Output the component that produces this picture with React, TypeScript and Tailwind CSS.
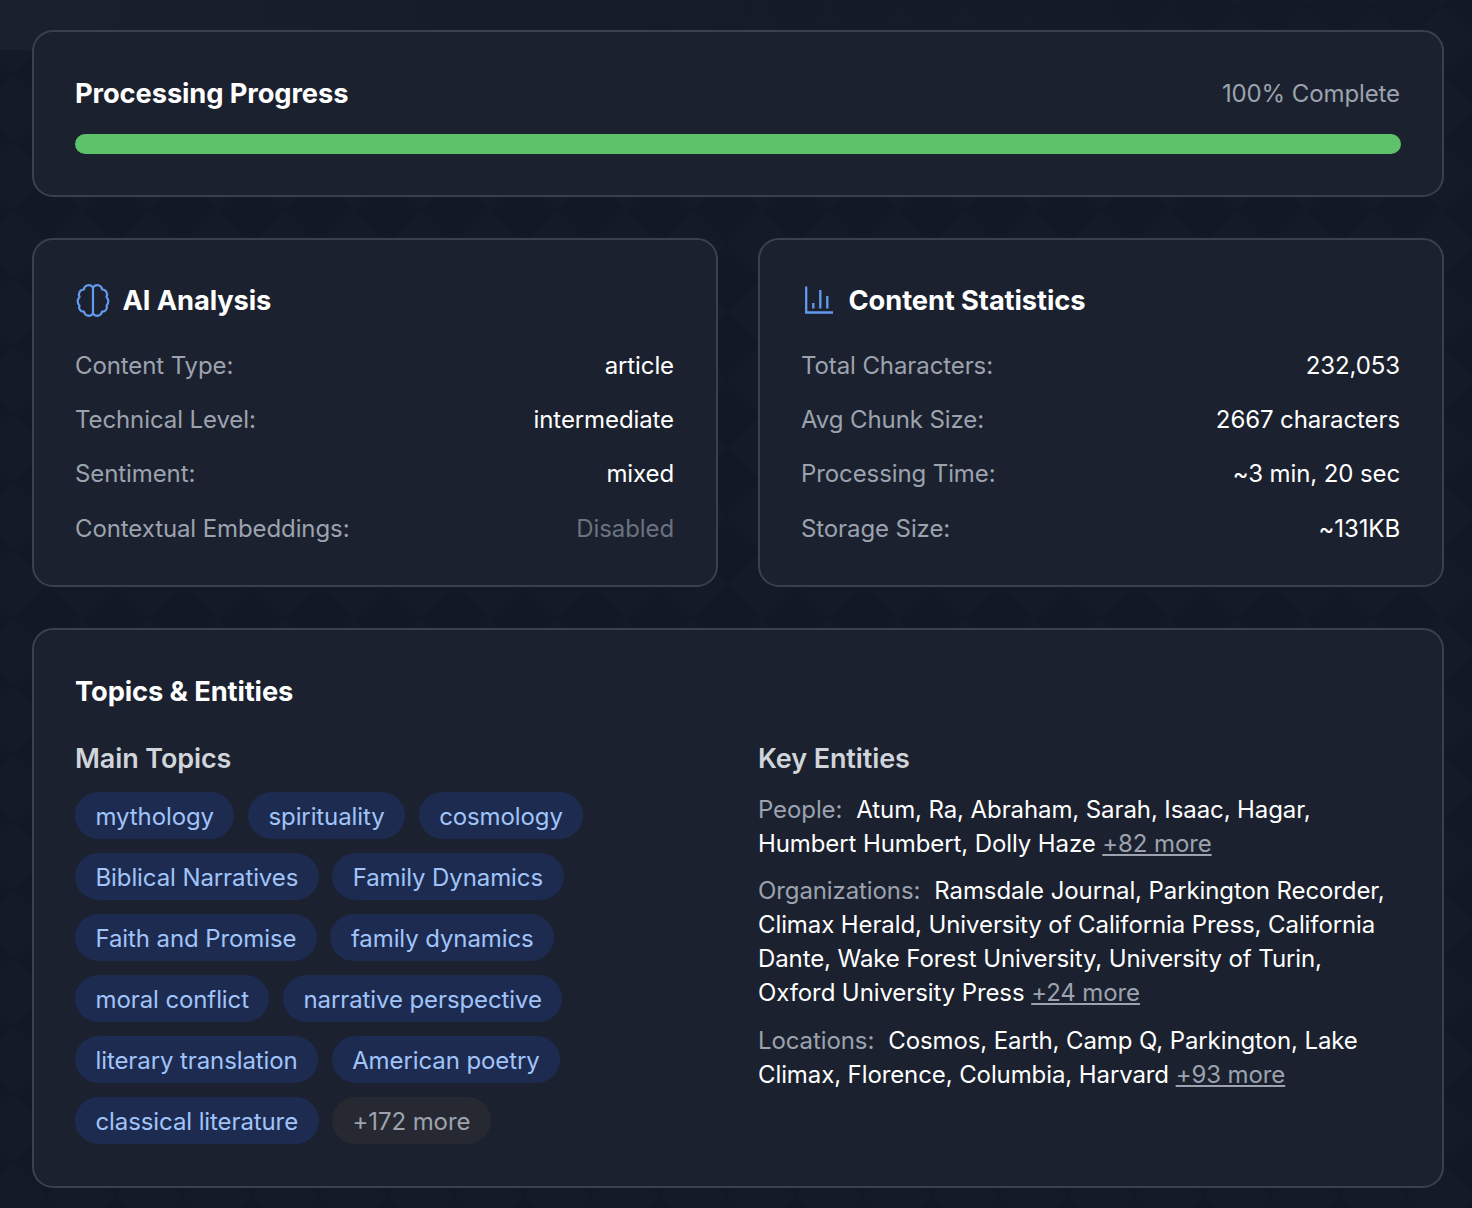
const font = { fontFamily: "Inter, sans-serif" };

const mainTopics = [
  ["mythology", "spirituality", "cosmology"],
  ["Biblical Narratives", "Family Dynamics"],
  ["Faith and Promise", "family dynamics"],
  ["moral conflict", "narrative perspective"],
  ["literary translation", "American poetry"],
  ["classical literature"],
];

function BrainIcon() {
  return (
    <svg viewBox="0 0 36 36" className="w-[36px] h-[36px] shrink-0" fill="none" stroke="#639bf0" strokeWidth="2.2" strokeLinejoin="round" strokeLinecap="round">
      <path d="M18 4.500V30.700" />
      <path d="M18 4.500A5 5 0 0 0 8.800 6.500A5 5 0 0 0 4.600 14A6 6 0 0 0 4.400 22.500A4.500 4.500 0 0 0 9 28.600A5 5 0 0 0 18 30.700" />
      <path d="M18 4.500A5 5 0 0 1 27.200 6.500A5 5 0 0 1 31.400 14A6 6 0 0 1 31.600 22.500A4.500 4.500 0 0 1 27 28.600A5 5 0 0 1 18 30.700" />
    </svg>
  );
}

function ChartIcon() {
  return (
    <svg viewBox="0 0 36 36" className="w-[36px] h-[36px] shrink-0" fill="none" stroke="#639bf0" strokeWidth="2.3">
      <path d="M5.200 3.500V29.500H32" />
      <path d="M12.300 20V25.500M19.300 7V25.500M26.300 13V25.500" />
    </svg>
  );
}

function StatRow({ label, value, muted }: { label: string; value: string; muted?: boolean }) {
  return (
    <div className="flex justify-between items-center h-[30px]">
      <span className="text-[#9ca3af]">{label}</span>
      <span className={`mr-[1px] ${muted ? "text-[#6b7280]" : "text-white"}`}>{value}</span>
    </div>
  );
}

function Tag({ children, more }: { children: string; more?: boolean }) {
  return (
    <span className={`h-[47px] flex items-center rounded-full px-[20.5px] pt-[2px] ${more ? "bg-[#262932] text-[#9ca3af]" : "bg-[#1e2b50] text-[#a0c4f9]"}`}>
      {children}
    </span>
  );
}

function Entity({ label, text, more }: { label: string; text: string; more: string }) {
  return (
    <p className="leading-[34px] text-white">
      <span className="text-[#9ca3af] mr-[14px]">{label}</span>
      {text} <span className="text-[#9ca3af] underline">{more}</span>
    </p>
  );
}

export default function App() {
  return (
    <div
      style={font}
      className="relative w-[1472px] h-[1208px] overflow-hidden bg-[#131926] bg-[conic-gradient(from_45deg,#141a27_25%,#131825_0_50%,#141a27_0_75%,#131825_0)] bg-[length:68px_68px] bg-[position:13px_6px] text-[24px] tracking-[-0.1px] pl-[32px] pr-[28px] pt-[30px]"
    >
      <div className="absolute left-0 top-0 w-full h-[50px] bg-gradient-to-r from-[#1b202e] via-[#171c2a] via-30% to-transparent" />
      <div className="relative flex flex-col gap-[41px]">
        {/* Progress */}
        <section className="h-[167px] rounded-[21px] border-2 border-[#3a404e] bg-[#1b212e] px-[41px] pt-[43px]">
          <div className="flex justify-between items-center h-[38px]">
            <h2 className="text-[27.3px] font-bold text-white">Processing Progress</h2>
            <span className="text-[#9ca3af] mr-[1px]">100% Complete</span>
          </div>
          <div className="mt-[21px] h-[20px] rounded-full bg-[#5dc26a]" />
        </section>

        {/* Analysis and statistics */}
        <div className="grid grid-cols-2 gap-[40px]">
          <section className="h-[349px] rounded-[21px] border-2 border-[#3a404e] bg-[#1b212e] px-[41px] pt-[43px]">
            <div className="flex items-center gap-[11.5px] h-[36px] mb-[31.5px]">
              <BrainIcon />
              <h2 className="text-[27.3px] font-bold text-white">AI Analysis</h2>
            </div>
            <div className="flex flex-col gap-[24.4px]">
              <StatRow label="Content Type:" value="article" />
              <StatRow label="Technical Level:" value="intermediate" />
              <StatRow label="Sentiment:" value="mixed" />
              <StatRow label="Contextual Embeddings:" value="Disabled" muted />
            </div>
          </section>
          <section className="h-[349px] rounded-[21px] border-2 border-[#3a404e] bg-[#1b212e] px-[41px] pt-[43px]">
            <div className="flex items-center gap-[11.5px] h-[36px] mb-[31.5px]">
              <ChartIcon />
              <h2 className="text-[27.3px] font-bold text-white">Content Statistics</h2>
            </div>
            <div className="flex flex-col gap-[24.4px]">
              <StatRow label="Total Characters:" value="232,053" />
              <StatRow label="Avg Chunk Size:" value="2667 characters" />
              <StatRow label="Processing Time:" value="~3 min, 20 sec" />
              <StatRow label="Storage Size:" value="~131KB" />
            </div>
          </section>
        </div>

        {/* Topics and entities */}
        <section className="h-[560px] rounded-[21px] border-2 border-[#3a404e] bg-[#1b212e] px-[41px] pt-[44px]">
          <h2 className="text-[27.3px] font-bold text-white h-[36px] flex items-center">Topics &amp; Entities</h2>
          <div className="grid grid-cols-2 gap-[40px] mt-[30px]">
            <div>
              <h3 className="text-[27px] font-semibold text-[#d1d5db] h-[36px] pt-[2px] flex items-center mb-[16px]">Main Topics</h3>
              <div className="flex flex-col gap-[14px]">
                {mainTopics.map((row, i) => (
                  <div key={i} className="flex gap-[13.5px]">
                    {row.map((t) => (
                      <Tag key={t}>{t}</Tag>
                    ))}
                    {i === mainTopics.length - 1 && <Tag more>+172 more</Tag>}
                  </div>
                ))}
              </div>
            </div>
            <div>
              <h3 className="text-[27px] font-semibold text-[#d1d5db] h-[36px] pt-[2px] flex items-center mb-[16px]">Key Entities</h3>
              <div className="flex flex-col gap-[13.5px] pt-[1px]">
                <Entity label="People:" text="Atum, Ra, Abraham, Sarah, Isaac, Hagar, Humbert Humbert, Dolly Haze" more="+82 more" />
                <div className="-mt-[1px]">
                  <Entity label="Organizations:" text="Ramsdale Journal, Parkington Recorder, Climax Herald, University of California Press, California Dante, Wake Forest University, University of Turin, Oxford University Press" more="+24 more" />
                </div>
                <div className="mt-[1px]">
                  <Entity label="Locations:" text="Cosmos, Earth, Camp Q, Parkington, Lake Climax, Florence, Columbia, Harvard" more="+93 more" />
                </div>
              </div>
            </div>
          </div>
        </section>
      </div>
    </div>
  );
}
